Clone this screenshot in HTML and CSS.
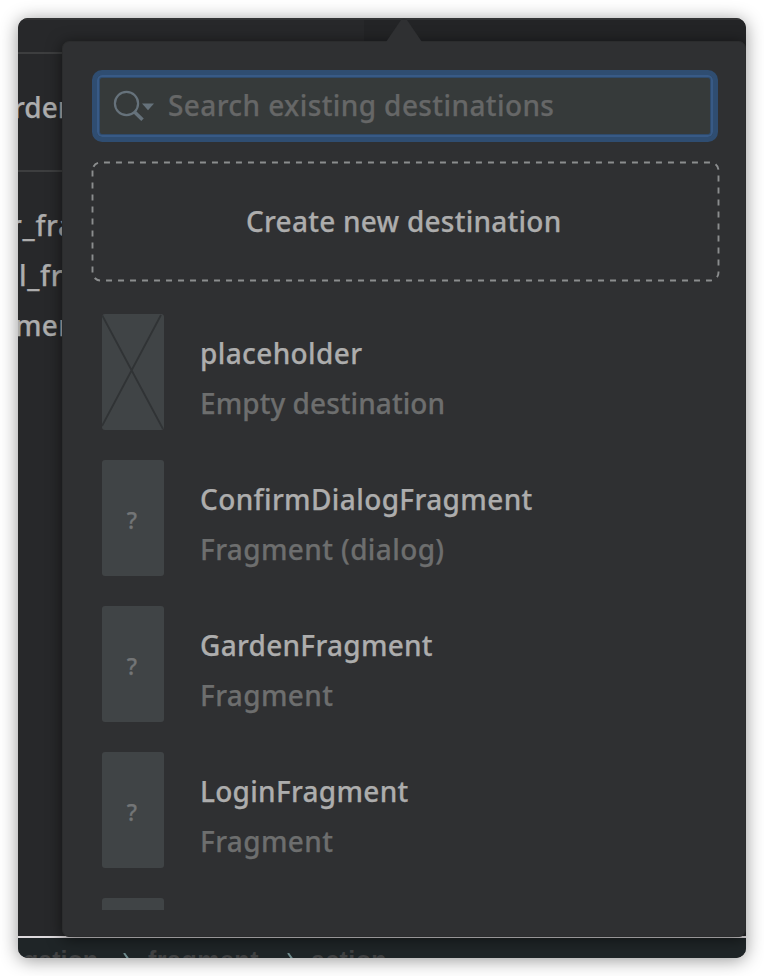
FILE: index.html
```
<!DOCTYPE html>
<html lang="en">
<head>
<meta charset="utf-8">
<title>Add destination</title>
<link rel="stylesheet" href="styles.css">
</head>
<body>
<div class="window">
  <div class="editor">
    <div class="pane">
      <div class="pane-head"></div>
      <div class="pane-host"><span class="host-name">rden</span></div>
      <div class="pane-item item-a">r_fra</div>
      <div class="pane-item item-b">l_fr</div>
      <div class="pane-item item-c">men</div>
    </div>
    <div class="canvas"></div>
  </div>
  <div class="crumbs">
    <span class="crumb crumb-a">gation</span>
    <svg class="sep" width="8" height="16" viewBox="0 0 8 16"><path d="M1 0l5 7-5 7" fill="none" stroke="#6f8b8d" stroke-width="2"/></svg>
    <span class="crumb crumb-b">fragment</span>
    <svg class="sep" width="8" height="16" viewBox="0 0 8 16"><path d="M1 0l5 7-5 7" fill="none" stroke="#6f8b8d" stroke-width="2"/></svg>
    <span class="crumb crumb-c">action</span>
  </div>
  <div class="popup">
    <svg class="arrow" width="38" height="24" viewBox="0 0 38 24"><path d="M1 24L16 2Q19 -1 22 2L37 24Z" fill="#2f3032"/></svg>
    <div class="search">
      <svg class="search-icon" width="42" height="32" viewBox="0 0 42 32"><circle cx="13.5" cy="13.5" r="11.6" fill="none" stroke="#66727b" stroke-width="2.2"/><path d="M21 21.500l8.500 8.200" stroke="#66727b" stroke-width="3.600"/><path d="M29 13.500h12l-6 6.800z" fill="#66727b"/></svg>
      <input class="search-input" type="text" placeholder="Search existing destinations">
    </div>
    <div class="create">
      <svg class="dashes" width="629" height="121" viewBox="0 0 629 121"><path d="M1.500 9.500V111.500A8 8 0 0 0 9.500 119.500H619.500A8 8 0 0 0 627.500 111.500V9.500A8 8 0 0 0 619.500 1.500H9.500A8 8 0 0 0 1.500 9.500" fill="none" stroke="#8b8d8e" stroke-width="1.900" stroke-dasharray="6 6"/></svg>
      <span class="create-label">Create new destination</span>
    </div>
    <div class="list">
      <div class="row">
        <svg class="thumb" width="62" height="116" viewBox="0 0 62 116"><path d="M0 1L61 115M59 1L0 112" stroke="#303335" stroke-width="1.800"/></svg>
        <div class="info"><div class="name">placeholder</div><div class="kind tight">Empty destination</div></div>
      </div>
      <div class="row">
        <div class="thumb">?</div>
        <div class="info"><div class="name">ConfirmDialogFragment</div><div class="kind">Fragment (dialog)</div></div>
      </div>
      <div class="row">
        <div class="thumb">?</div>
        <div class="info"><div class="name snug">GardenFragment</div><div class="kind">Fragment</div></div>
      </div>
      <div class="row">
        <div class="thumb">?</div>
        <div class="info"><div class="name snug">LoginFragment</div><div class="kind">Fragment</div></div>
      </div>
      <div class="row"><div class="thumb"></div></div>
    </div>
  </div>
</div>
</body>
</html>
```
FILE: styles.css
```
* { box-sizing: border-box; }
html, body { margin: 0; height: 976px; overflow: hidden; background: #fff; }
body {
  padding: 18px;
  font-family: "Noto Sans", "Open Sans", sans-serif;
  font-size: 28px;
  font-weight: 500;
  -webkit-text-stroke: .25px currentColor;
  color: #adadad;
}
.window {
  position: relative;
  width: 728px;
  height: 940px;
  border-radius: 10px;
  overflow: hidden;
  background: #27282a;
  display: flex;
  flex-direction: column;
}
body::before {
  content: "";
  position: absolute;
  left: 18px; top: 18px;
  width: 728px; height: 940px;
  border-radius: 10px;
  box-shadow: 0 2px 18px rgba(0,0,0,.42);
}
.editor { display: flex; height: 918px; border-top: 2px solid #323334; }
.pane { width: 346px; white-space: nowrap; background: #27282a; }
.canvas { flex: 1; background: #232426; }
.pane-head { height: 34px; border-bottom: 2px solid #3d3e3f; }
.pane-host { height: 118px; border-bottom: 2px solid #3d3e3f; padding-top: 32px; line-height: 42px; }
.host-name { margin-left: -5px; }
.pane-item { height: 50px; line-height: 50px; }
.item-a { margin-top: 28px; margin-left: -8px; letter-spacing: .7px; }
.item-b { margin-left: 1px; letter-spacing: .7px; }
.item-c { margin-left: -3px; letter-spacing: .3px; }
.crumbs {
  height: 22px;
  border-top: 2px solid #ddd9dc;
  background: #1f2527;
  display: flex;
  align-items: flex-start;
  overflow: hidden;
  color: #414243;
  font-family: "Liberation Sans", sans-serif;
  font-weight: 700;
  font-size: 25px;
  line-height: 30px;
  padding-top: 7px;
  -webkit-text-stroke: 0;
}
.crumb { display: block; height: 30px; flex: none; white-space: nowrap; }
.crumb-a { width: 75px; margin-left: 5px; }
.crumb-b { width: 114px; margin-left: 17px; letter-spacing: .5px; }
.crumb-c { margin-left: 16px; letter-spacing: .4px; }
.sep { flex: none; margin: 8px 0 0 25px; }
.popup {
  position: absolute;
  left: 44px; top: 23px;
  width: 684px; height: 896px;
  border-radius: 7px;
  border: 1px solid #2b2c2d;
  background: #2f3032;
  box-shadow: 0 2px 15px rgba(0,0,0,.55);
  padding: 28px 26px 0 29px;
}
.arrow { position: absolute; left: 322px; top: -24px; }
.search {
  width: 626px; height: 72px;
  border: 5px solid #2f4d71;
  border-radius: 10px;
  background: #363a3a;
  box-shadow: inset 0 0 0 2px #385a86, inset 0 0 0 3px #2f4b6c;
  display: flex;
  align-items: flex-start;
  padding: 15px 15px 0 16px;
}
.search-icon { flex: none; }
.search-input {
  width: 440px; height: 40px;
  margin: -5px 0 0 13px;
  padding: 0;
  border: 0;
  outline: 0;
  background: transparent;
  font: inherit;
  letter-spacing: .4px;
  color: #adadad;
}
.search-input::placeholder { color: #666767; opacity: 1; }
.create {
  position: relative;
  width: 629px; height: 121px;
  margin: 19px 0 0 -1px;
  display: flex;
  align-items: center;
  padding: 0 0 2px 155px;
}
.dashes { position: absolute; left: 0; top: 0; }
.create-label { white-space: nowrap; letter-spacing: .25px; }
.list { height: 611px; margin-top: 17px; overflow: hidden; }
.row { display: flex; height: 146px; padding: 15px 0 0 10px; }
.thumb {
  flex: none;
  width: 62px; height: 116px;
  border-radius: 3px;
  background: #404446;
  color: #737576;
  font-size: 23px;
  text-align: center;
  line-height: 120px;
  padding-right: 2px;
}
svg.thumb { padding: 0; }
.info { margin: 14px 0 0 36px; white-space: nowrap; letter-spacing: .38px; }
.name, .kind { height: 50px; line-height: 50px; width: max-content; }
.kind { color: #6d6e6e; }
.tight { letter-spacing: .06px; }
.snug { letter-spacing: .28px; }
```
